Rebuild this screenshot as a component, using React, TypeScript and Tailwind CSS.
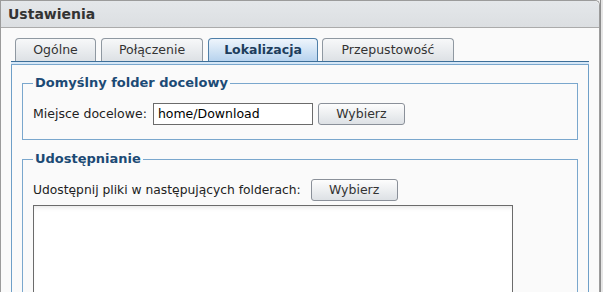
import React from 'react';

const font = { fontFamily: '"DejaVu Sans", Verdana, sans-serif' };

const tabs = ['Ogólne', 'Połączenie', 'Lokalizacja', 'Przepustowość'];
const tabBox = ['w-[81px]', 'w-[102px] ml-[5px]', 'w-[110px] ml-[5px]', 'w-[132px] ml-[4px]'];

const Button: React.FC<{ label: string }> = ({ label }) => (
  <button className="w-[87px] h-[22px] rounded-[3px] border border-[#8a9099] bg-gradient-to-b from-[#fdfdfd] to-[#dde1e5] text-[12.5px] text-[#333] leading-none">
    {label}
  </button>
);

const App: React.FC = () => {
  return (
    <div className="w-[603px] h-[292px] overflow-hidden bg-[#eeeeee] flex" style={font}>
      <div className="w-[600px] h-[320px] shrink-0 border-x border-t border-[#9b9b9b] rounded-tr-[5px] bg-[#fafafa] flex flex-col">
        {/* Title bar */}
        <div className="h-[27px] shrink-0 bg-gradient-to-b from-[#e4e7ea] to-[#dcdfe2] border-b border-[#ababab] rounded-tr-[5px] flex items-center pl-[7px]">
          <span className="text-[14px] font-bold text-[#333]">Ustawienia</span>
        </div>

        <div className="pt-[10px] pl-[10px] pr-[10px]">
          {/* Tabs */}
          <div className="flex pl-[4px] items-end h-[23px]">
            {tabs.map((t, i) => {
              const active = i === 2;
              return (
                <div
                  key={t}
                  className={`${tabBox[i]} h-[23px] rounded-t-[4px] border border-b-0 flex items-center justify-center text-[12.5px] ${
                    active
                      ? 'border-[#4f7fa8] bg-gradient-to-b from-[#eef5fc] to-[#b7d3ee] font-bold text-[#1d3d5c]'
                      : 'border-[#8f98a1] bg-gradient-to-b from-[#f7f8f9] to-[#dde1e5] text-[#333]'
                  }`}
                >
                  {t}
                </div>
              );
            })}
          </div>

          {/* Panel */}
          <div className="border-x border-b border-[#6e9fc8] bg-[#fafafa]">
            <div className="h-[4px] border-t border-b border-t-[#3d6f99] border-b-[#7aa7cd] bg-[#d6e7f7] -mx-px" />
            <div className="pt-[10px] px-[10px] pb-[20px] flex flex-col gap-[11px]">
              <fieldset className="border border-[#7aa7cd] px-[10px] pb-[14px]">
                <legend className="px-[2px] text-[13px] font-bold text-[#1c4a75] leading-[16px]">
                  Domyślny folder docelowy
                </legend>
                <div className="flex items-center mt-[12px] h-[22px]">
                  <span className="text-[12.5px] text-[#222] mr-[6px]">Miejsce docelowe:</span>
                  <div className="w-[160px] h-[22px] border border-[#6b6b6b] bg-white flex items-center px-[4px] text-[12.5px] text-black mr-[5px]">
                    home/Download
                  </div>
                  <Button label="Wybierz" />
                </div>
              </fieldset>

              <fieldset className="border border-[#7aa7cd] px-[10px] pb-[14px]">
                <legend className="px-[2px] text-[13px] font-bold text-[#1c4a75] leading-[16px]">
                  Udostępnianie
                </legend>
                <div className="flex items-center mt-[12px] h-[22px]">
                  <span className="text-[12.3px] text-[#222] mr-[10px]">Udostępnij pliki w następujących folderach:</span>
                  <Button label="Wybierz" />
                </div>
                <div className="mt-[4px] w-[480px] h-[120px] border border-[#6b6b6b] bg-white shadow-[inset_0_4px_5px_-3px_rgba(0,0,0,0.12)]" />
              </fieldset>
            </div>
          </div>
        </div>
      </div>
      <div className="w-px shrink-0 bg-[#8c8c8c]" />
      <div className="flex-1 bg-[#e6e6e6]" />
    </div>
  );
};

export default App;
